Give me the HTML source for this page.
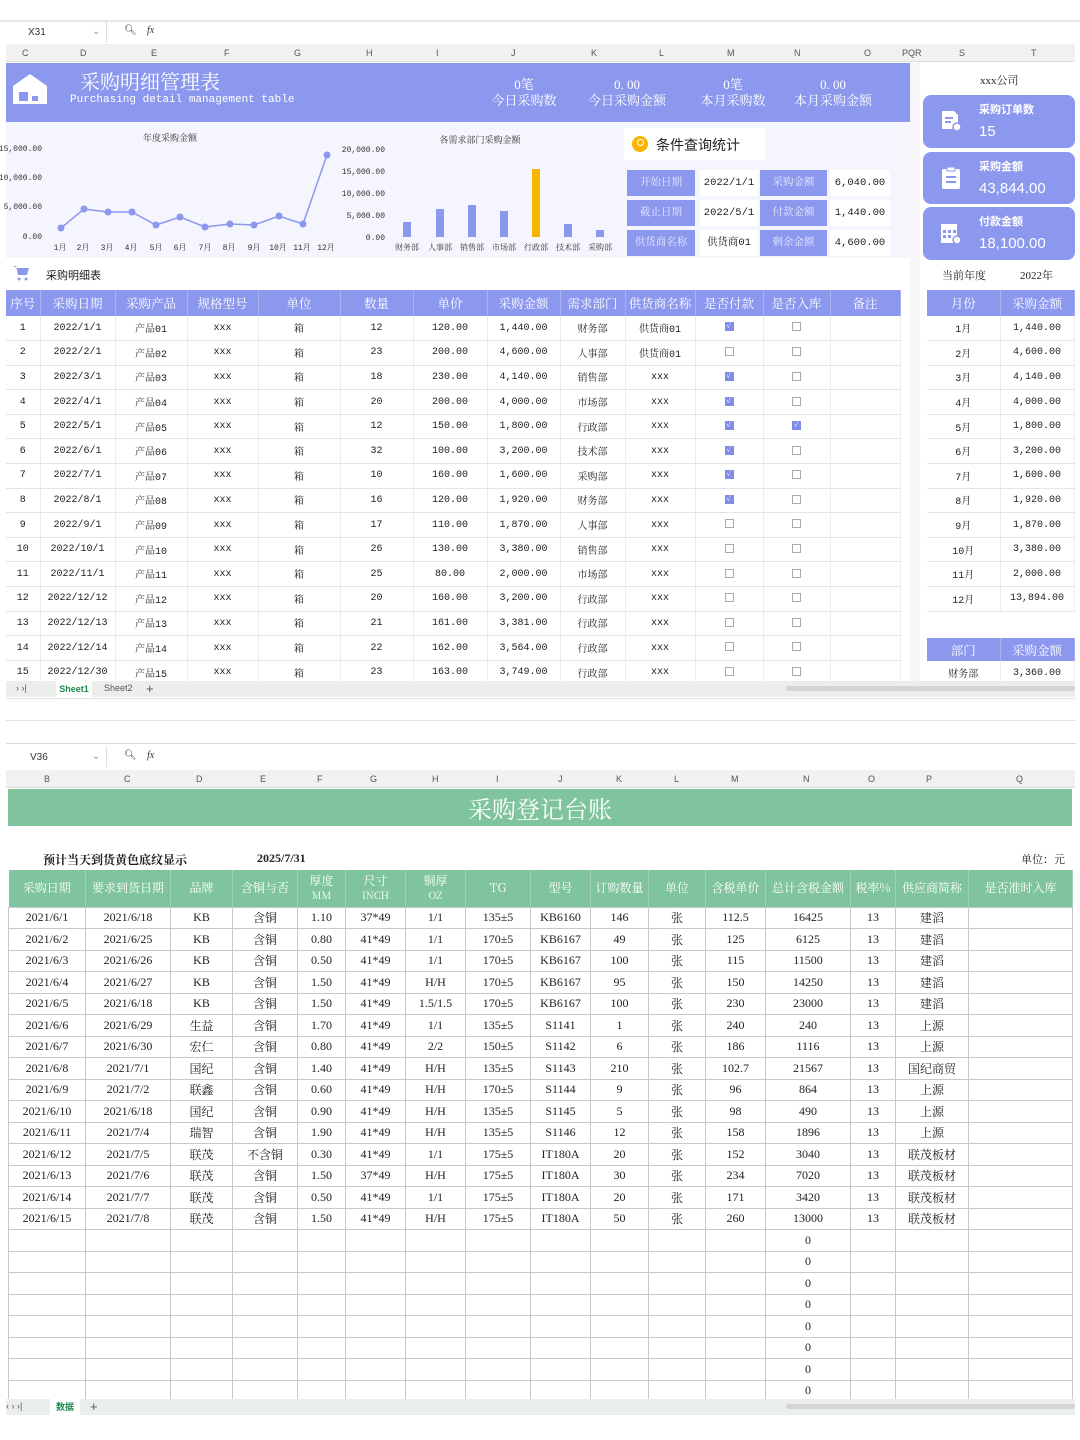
<!DOCTYPE html>
<html><head><meta charset="utf-8">
<style>
*{margin:0;padding:0;box-sizing:border-box}
body{width:1080px;height:1440px;background:#fff;position:relative;overflow:hidden;font-family:"Liberation Serif","Noto Serif CJK SC",serif;color:#222}
.a{position:absolute}
.fbar{position:absolute;left:6px;right:5px;height:20px;background:#fff;font-family:"Liberation Sans",sans-serif;font-size:10px;color:#333}
.colh{position:absolute;left:6px;right:5px;height:18px;background:#f1f1f1;border-bottom:1px solid #ddd;font-family:"Liberation Sans",sans-serif;font-size:9px;color:#555}
.colh span{position:absolute;top:4px}
table{border-collapse:collapse;table-layout:fixed;position:absolute}
td,th{text-align:center;white-space:nowrap;overflow:hidden}
.t1 th{background:#8c98ee;color:#fff;font-weight:normal;font-size:12.5px;height:26px;border-right:1px solid #a9b1f2;font-family:"Noto Serif CJK SC",serif}
.t1 td{height:24.6px;font-size:10px;font-family:"Liberation Mono","Noto Serif CJK SC",monospace;border-bottom:1px solid #e4e4e4;border-right:1px solid #eee}
.cb{display:inline-block;width:9px;height:9px;border:1px solid #aaa;vertical-align:middle}
.ck{display:inline-block;width:9px;height:9px;background:#7f8de8;vertical-align:middle;color:#fff;font-size:8px;line-height:9px}
.t2 th{background:#7fc49c;color:#fff;font-weight:normal;font-size:12px;height:37px;border-right:1px solid #9fd3b4;font-family:"Noto Serif CJK SC",serif;line-height:14px}
.t2 td{height:21.5px;font-size:12px;border:1px solid #c8c8c8}
.card{position:absolute;left:923px;width:152px;background:#8c98ee;border-radius:8px;color:#fff;font-family:"Liberation Sans","Noto Sans CJK SC",sans-serif}
.card .l{position:absolute;left:56px;top:6px;font-size:11px;font-weight:bold}
.card .n{position:absolute;left:56px;top:28px;font-size:15px}
.q{position:absolute;height:26px;font-size:10.5px;line-height:26px;text-align:center;font-family:"Liberation Mono","Noto Serif CJK SC",monospace}
.ql{background:#8c98ee;color:#e8eaff;width:68px}
.qv{background:#fff;width:58px}
.tab{position:absolute;left:6px;right:5px;height:16px;background:#eceeec;font-family:"Liberation Sans","Noto Sans CJK SC",sans-serif;font-size:9px;color:#555}
</style></head><body>

<div class="a" style="left:0;top:20px;width:1080px;height:2px;background:#e6e6e6"></div>
<div class="fbar" style="top:22px"><span class="a" style="left:22px;top:5px">X31</span><span class="a" style="left:86px;top:4px;color:#999">⌄</span><div class="a" style="left:100px;top:0;width:1px;height:20px;background:#ddd"></div><span class="a" style="left:118px;top:3px">🔍︎</span><span class="a" style="left:141px;top:3px;font-style:italic;font-family:'Liberation Serif'">fx</span></div>
<div class="colh" style="top:44px"><span style="left:16px">C</span><span style="left:74px">D</span><span style="left:145px">E</span><span style="left:218px">F</span><span style="left:288px">G</span><span style="left:360px">H</span><span style="left:430px">I</span><span style="left:505px">J</span><span style="left:585px">K</span><span style="left:653px">L</span><span style="left:721px">M</span><span style="left:788px">N</span><span style="left:858px">O</span><span style="left:896px">PQR</span><span style="left:953px">S</span><span style="left:1025px">T</span></div>

<div class="a" style="left:6px;top:63px;width:904px;height:59px;background:#8c98ee"></div>
<svg class="a" style="left:11px;top:72px" width="38" height="34" viewBox="0 0 38 34"><path d="M2 14 L19 2 L36 14 V32 H2Z" fill="#fff"/><rect x="8" y="20" width="9" height="9" fill="#8c98ee"/><rect x="21" y="24" width="6" height="5" fill="#8c98ee"/></svg>
<div class="a" style="left:80px;top:66px;font-size:20px;color:#fff;font-family:'Noto Serif CJK SC',serif">采购明细管理表</div>
<div class="a" style="left:70px;top:94px;font-size:11px;color:#fff;font-family:'Liberation Mono',monospace">Purchasing detail management table</div>
<div class="a" style="left:474px;top:77px;width:100px;text-align:center;color:#fff;font-size:13px;line-height:16px">0笔<br>今日采购数</div>
<div class="a" style="left:577px;top:77px;width:100px;text-align:center;color:#fff;font-size:13px;line-height:16px">0. 00<br>今日采购金额</div>
<div class="a" style="left:683px;top:77px;width:100px;text-align:center;color:#fff;font-size:13px;line-height:16px">0笔<br>本月采购数</div>
<div class="a" style="left:783px;top:77px;width:100px;text-align:center;color:#fff;font-size:13px;line-height:16px">0. 00<br>本月采购金额</div>

<div class="a" style="left:6px;top:122px;width:904px;height:136px;background:#f4f5fd"></div>
<svg class="a" style="left:0;top:122px" width="620" height="136" viewBox="0 122 620 136" font-family="Liberation Mono,Noto Serif CJK SC,monospace" font-size="8" fill="#333">
<text x="170" y="141" text-anchor="middle" font-size="9">年度采购金额</text>
<text x="42" y="151" text-anchor="end">15,000.00</text><text x="42" y="180" text-anchor="end">10,000.00</text><text x="42" y="209" text-anchor="end">5,000.00</text><text x="42" y="239" text-anchor="end">0.00</text>
<polyline fill="none" stroke="#8c98ee" stroke-width="1.5" points="61,228 84,209 108,212 132,212 156,225 180,217 205,227 230,224 254,225 279,216 303,224 327,155"/>
<g fill="#8c98ee"><circle cx="61" cy="228" r="3.5"/><circle cx="84" cy="209" r="3.5"/><circle cx="108" cy="212" r="3.5"/><circle cx="132" cy="212" r="3.5"/><circle cx="156" cy="225" r="3.5"/><circle cx="180" cy="217" r="3.5"/><circle cx="205" cy="227" r="3.5"/><circle cx="230" cy="224" r="3.5"/><circle cx="254" cy="225" r="3.5"/><circle cx="279" cy="216" r="3.5"/><circle cx="303" cy="224" r="3.5"/><circle cx="327" cy="155" r="3.5"/></g>
<g text-anchor="middle"><text x="60" y="250">1月</text><text x="83" y="250">2月</text><text x="107" y="250">3月</text><text x="131" y="250">4月</text><text x="156" y="250">5月</text><text x="180" y="250">6月</text><text x="205" y="250">7月</text><text x="229" y="250">8月</text><text x="254" y="250">9月</text><text x="278" y="250">10月</text><text x="302" y="250">11月</text><text x="326" y="250">12月</text></g>
<text x="480" y="143" text-anchor="middle" font-size="9">各需求部门采购金额</text>
<text x="385" y="152" text-anchor="end">20,000.00</text><text x="385" y="174" text-anchor="end">15,000.00</text><text x="385" y="196" text-anchor="end">10,000.00</text><text x="385" y="218" text-anchor="end">5,000.00</text><text x="385" y="240" text-anchor="end">0.00</text>
<g fill="#8c98ee"><rect x="403" y="222" width="8" height="15"/><rect x="436" y="209" width="8" height="28"/><rect x="468" y="205" width="8" height="32"/><rect x="500" y="211" width="8" height="26"/><rect x="564" y="224" width="8" height="13"/><rect x="596" y="230" width="8" height="7"/></g>
<rect x="532" y="169" width="8" height="68" fill="#f7b500"/>
<g text-anchor="middle"><text x="407" y="250">财务部</text><text x="440" y="250">人事部</text><text x="472" y="250">销售部</text><text x="504" y="250">市场部</text><text x="536" y="250">行政部</text><text x="568" y="250">技术部</text><text x="600" y="250">采购部</text></g>
</svg>

<div class="a" style="left:624px;top:128px;width:141px;height:32px;background:#fff"></div>
<div class="a" style="left:632px;top:136px;width:16px;height:16px;border-radius:50%;background:#f7b500"></div>
<div class="a" style="left:637px;top:139px;width:7px;height:7px;border-radius:50%;border:1.5px solid #fff"></div>
<div class="a" style="left:656px;top:135px;font-size:14px;font-family:'Noto Sans CJK SC',sans-serif">条件查询统计</div>
<div class="q ql" style="left:627px;top:170px">开始日期</div><div class="q qv" style="left:700px;top:170px">2022/1/1</div><div class="q ql" style="left:760px;top:170px;width:67px">采购金额</div><div class="q qv" style="left:830px;top:170px;width:60px">6,040.00</div>
<div class="q ql" style="left:627px;top:200px">截止日期</div><div class="q qv" style="left:700px;top:200px">2022/5/1</div><div class="q ql" style="left:760px;top:200px;width:67px">付款金额</div><div class="q qv" style="left:830px;top:200px;width:60px">1,440.00</div>
<div class="q ql" style="left:627px;top:230px">供货商名称</div><div class="q qv" style="left:700px;top:230px">供货商01</div><div class="q ql" style="left:760px;top:230px;width:67px">剩余金额</div><div class="q qv" style="left:830px;top:230px;width:60px">4,600.00</div>

<div class="a" style="left:910px;top:63px;width:10px;height:620px;background:#f6f6f8"></div>
<div class="a" style="left:980px;top:72px;font-size:11px">xxx公司</div>
<div class="card" style="top:95px;height:53px"><svg class="a" style="left:16px;top:14px" width="24" height="24" viewBox="0 0 24 24"><path d="M3 2h12l4 4v14H3z" fill="#fff"/><rect x="6" y="8" width="8" height="2" fill="#8c98ee"/><rect x="6" y="12" width="6" height="2" fill="#8c98ee"/><circle cx="18" cy="18" r="4" fill="#fff" stroke="#8c98ee" stroke-width="1.5"/></svg><div class="l">采购订单数</div><div class="n">15</div></div>
<div class="card" style="top:152px;height:52px"><svg class="a" style="left:17px;top:14px" width="22" height="24" viewBox="0 0 22 24"><rect x="2" y="3" width="18" height="20" rx="2" fill="#fff"/><rect x="7" y="1" width="8" height="4" fill="#fff" stroke="#8c98ee"/><rect x="6" y="10" width="10" height="2" fill="#8c98ee"/><rect x="6" y="15" width="10" height="2" fill="#8c98ee"/></svg><div class="l">采购金额</div><div class="n">43,844.00</div></div>
<div class="card" style="top:207px;height:53px"><svg class="a" style="left:16px;top:15px" width="24" height="24" viewBox="0 0 24 24"><rect x="2" y="2" width="16" height="19" fill="#fff"/><g fill="#8c98ee"><rect x="4" y="8" width="3" height="3"/><rect x="9" y="8" width="3" height="3"/><rect x="14" y="8" width="3" height="3"/><rect x="4" y="13" width="3" height="3"/><rect x="9" y="13" width="3" height="3"/></g><circle cx="18" cy="18" r="4" fill="#fff" stroke="#8c98ee" stroke-width="1.5"/></svg><div class="l">付款金额</div><div class="n">18,100.00</div></div>
<div class="a" style="left:942px;top:267px;font-size:11px">当前年度</div>
<div class="a" style="left:1020px;top:267px;font-size:11px">2022年</div>

<svg class="a" style="left:12px;top:265px" width="18" height="16" viewBox="0 0 18 16"><path d="M1 1h3l2 9h9l2-7H5" fill="#8c98ee"/><circle cx="7" cy="14" r="1.5" fill="#8c98ee"/><circle cx="14" cy="14" r="1.5" fill="#8c98ee"/></svg>
<div class="a" style="left:46px;top:267px;font-size:11px;font-family:'Noto Sans CJK SC',sans-serif">采购明细表</div>

<table class="t1" style="left:6px;top:290px;width:894px">
<colgroup><col style="width:34px"><col style="width:75px"><col style="width:72px"><col style="width:71px"><col style="width:82px"><col style="width:73px"><col style="width:74px"><col style="width:73px"><col style="width:65px"><col style="width:70px"><col style="width:68px"><col style="width:67px"><col style="width:70px"></colgroup>
<tr><th>序号</th><th>采购日期</th><th>采购产品</th><th>规格型号</th><th>单位</th><th>数量</th><th>单价</th><th>采购金额</th><th>需求部门</th><th>供货商名称</th><th>是否付款</th><th>是否入库</th><th>备注</th></tr>
<tr><td>1</td><td>2022/1/1</td><td>产品01</td><td>xxx</td><td>箱</td><td>12</td><td>120.00</td><td>1,440.00</td><td>财务部</td><td>供货商01</td><td><span class="ck">✓</span></td><td><span class="cb"></span></td><td></td></tr>
<tr><td>2</td><td>2022/2/1</td><td>产品02</td><td>xxx</td><td>箱</td><td>23</td><td>200.00</td><td>4,600.00</td><td>人事部</td><td>供货商01</td><td><span class="cb"></span></td><td><span class="cb"></span></td><td></td></tr>
<tr><td>3</td><td>2022/3/1</td><td>产品03</td><td>xxx</td><td>箱</td><td>18</td><td>230.00</td><td>4,140.00</td><td>销售部</td><td>xxx</td><td><span class="ck">✓</span></td><td><span class="cb"></span></td><td></td></tr>
<tr><td>4</td><td>2022/4/1</td><td>产品04</td><td>xxx</td><td>箱</td><td>20</td><td>200.00</td><td>4,000.00</td><td>市场部</td><td>xxx</td><td><span class="ck">✓</span></td><td><span class="cb"></span></td><td></td></tr>
<tr><td>5</td><td>2022/5/1</td><td>产品05</td><td>xxx</td><td>箱</td><td>12</td><td>150.00</td><td>1,800.00</td><td>行政部</td><td>xxx</td><td><span class="ck">✓</span></td><td><span class="ck">✓</span></td><td></td></tr>
<tr><td>6</td><td>2022/6/1</td><td>产品06</td><td>xxx</td><td>箱</td><td>32</td><td>100.00</td><td>3,200.00</td><td>技术部</td><td>xxx</td><td><span class="ck">✓</span></td><td><span class="cb"></span></td><td></td></tr>
<tr><td>7</td><td>2022/7/1</td><td>产品07</td><td>xxx</td><td>箱</td><td>10</td><td>160.00</td><td>1,600.00</td><td>采购部</td><td>xxx</td><td><span class="ck">✓</span></td><td><span class="cb"></span></td><td></td></tr>
<tr><td>8</td><td>2022/8/1</td><td>产品08</td><td>xxx</td><td>箱</td><td>16</td><td>120.00</td><td>1,920.00</td><td>财务部</td><td>xxx</td><td><span class="ck">✓</span></td><td><span class="cb"></span></td><td></td></tr>
<tr><td>9</td><td>2022/9/1</td><td>产品09</td><td>xxx</td><td>箱</td><td>17</td><td>110.00</td><td>1,870.00</td><td>人事部</td><td>xxx</td><td><span class="cb"></span></td><td><span class="cb"></span></td><td></td></tr>
<tr><td>10</td><td>2022/10/1</td><td>产品10</td><td>xxx</td><td>箱</td><td>26</td><td>130.00</td><td>3,380.00</td><td>销售部</td><td>xxx</td><td><span class="cb"></span></td><td><span class="cb"></span></td><td></td></tr>
<tr><td>11</td><td>2022/11/1</td><td>产品11</td><td>xxx</td><td>箱</td><td>25</td><td>80.00</td><td>2,000.00</td><td>市场部</td><td>xxx</td><td><span class="cb"></span></td><td><span class="cb"></span></td><td></td></tr>
<tr><td>12</td><td>2022/12/12</td><td>产品12</td><td>xxx</td><td>箱</td><td>20</td><td>160.00</td><td>3,200.00</td><td>行政部</td><td>xxx</td><td><span class="cb"></span></td><td><span class="cb"></span></td><td></td></tr>
<tr><td>13</td><td>2022/12/13</td><td>产品13</td><td>xxx</td><td>箱</td><td>21</td><td>161.00</td><td>3,381.00</td><td>行政部</td><td>xxx</td><td><span class="cb"></span></td><td><span class="cb"></span></td><td></td></tr>
<tr><td>14</td><td>2022/12/14</td><td>产品14</td><td>xxx</td><td>箱</td><td>22</td><td>162.00</td><td>3,564.00</td><td>行政部</td><td>xxx</td><td><span class="cb"></span></td><td><span class="cb"></span></td><td></td></tr>
<tr><td>15</td><td>2022/12/30</td><td>产品15</td><td>xxx</td><td>箱</td><td>23</td><td>163.00</td><td>3,749.00</td><td>行政部</td><td>xxx</td><td><span class="cb"></span></td><td><span class="cb"></span></td><td></td></tr>
</table>

<table class="t1" style="left:927px;top:290px;width:147px">
<colgroup><col style="width:73px"><col style="width:74px"></colgroup>
<tr><th>月份</th><th>采购金额</th></tr>
<tr><td>1月</td><td>1,440.00</td></tr><tr><td>2月</td><td>4,600.00</td></tr><tr><td>3月</td><td>4,140.00</td></tr><tr><td>4月</td><td>4,000.00</td></tr><tr><td>5月</td><td>1,800.00</td></tr><tr><td>6月</td><td>3,200.00</td></tr><tr><td>7月</td><td>1,600.00</td></tr><tr><td>8月</td><td>1,920.00</td></tr><tr><td>9月</td><td>1,870.00</td></tr><tr><td>10月</td><td>3,380.00</td></tr><tr><td>11月</td><td>2,000.00</td></tr><tr><td>12月</td><td>13,894.00</td></tr>
</table>
<table class="t1" style="left:927px;top:638px;width:147px">
<colgroup><col style="width:73px"><col style="width:74px"></colgroup>
<tr><th style="height:23px">部门</th><th style="height:23px">采购金额</th></tr>
<tr><td>财务部</td><td>3,360.00</td></tr>
</table>

<div class="tab" style="top:681px"><span class="a" style="left:10px;top:2px">› ›|</span><span class="a" style="left:50px;top:0;height:16px;width:36px;background:#fff;color:#1e8a4c;font-weight:bold;text-align:center;line-height:16px">Sheet1</span><span class="a" style="left:98px;top:2px">Sheet2</span><span class="a" style="left:140px;top:0;font-size:13px">+</span><div class="a" style="left:780px;top:5px;width:289px;height:5px;background:#d4d4d4;border-radius:3px"></div></div>
<div class="a" style="left:6px;top:698px;width:1070px;height:1px;background:#e2e2e2"></div>
<div class="a" style="left:6px;top:720px;width:1070px;height:1px;background:#e2e2e2"></div>
<div class="a" style="left:6px;top:743px;width:1070px;height:1px;background:#d8d8d8"></div>

<div class="fbar" style="top:747px"><span class="a" style="left:24px;top:5px">V36</span><span class="a" style="left:86px;top:4px;color:#999">⌄</span><div class="a" style="left:100px;top:0;width:1px;height:20px;background:#ddd"></div><span class="a" style="left:118px;top:3px">🔍︎</span><span class="a" style="left:141px;top:3px;font-style:italic;font-family:'Liberation Serif'">fx</span></div>
<div class="colh" style="top:770px"><span style="left:38px">B</span><span style="left:118px">C</span><span style="left:190px">D</span><span style="left:254px">E</span><span style="left:311px">F</span><span style="left:364px">G</span><span style="left:426px">H</span><span style="left:490px">I</span><span style="left:552px">J</span><span style="left:610px">K</span><span style="left:668px">L</span><span style="left:725px">M</span><span style="left:797px">N</span><span style="left:862px">O</span><span style="left:920px">P</span><span style="left:1010px">Q</span></div>
<div class="a" style="left:8px;top:789px;width:1064px;height:37px;background:#7fc49c;color:#fff;font-size:24px;text-align:center;line-height:37px;font-family:'Noto Serif CJK SC',serif">采购登记台账</div>
<div class="a" style="left:43px;top:851px;font-size:12px;font-weight:bold;font-family:'Noto Serif CJK SC',serif">预计当天到货黄色底纹显示</div>
<div class="a" style="left:257px;top:851px;font-size:12px;font-weight:bold">2025/7/31</div>
<div class="a" style="left:1021px;top:851px;font-size:11px">单位：元</div>

<table class="t2" style="left:8px;top:870px;width:1064px">
<colgroup><col style="width:77px"><col style="width:85px"><col style="width:62px"><col style="width:65px"><col style="width:48px"><col style="width:60px"><col style="width:60px"><col style="width:65px"><col style="width:60px"><col style="width:58px"><col style="width:57px"><col style="width:60px"><col style="width:85px"><col style="width:45px"><col style="width:73px"><col style="width:104px"></colgroup>
<tr><th>采购日期</th><th>要求到货日期</th><th>品牌</th><th>含铜与否</th><th>厚度<br><small>MM</small></th><th>尺寸<br><small>INCH</small></th><th>铜厚<br><small>OZ</small></th><th>TG</th><th>型号</th><th>订购数量</th><th>单位</th><th>含税单价</th><th>总计含税金额</th><th>税率%</th><th>供应商简称</th><th>是否准时入库</th></tr>
<tr><td>2021/6/1</td><td>2021/6/18</td><td>KB</td><td>含铜</td><td>1.10</td><td>37*49</td><td>1/1</td><td>135±5</td><td>KB6160</td><td>146</td><td>张</td><td>112.5</td><td>16425</td><td>13</td><td>建滔</td><td></td></tr>
<tr><td>2021/6/2</td><td>2021/6/25</td><td>KB</td><td>含铜</td><td>0.80</td><td>41*49</td><td>1/1</td><td>170±5</td><td>KB6167</td><td>49</td><td>张</td><td>125</td><td>6125</td><td>13</td><td>建滔</td><td></td></tr>
<tr><td>2021/6/3</td><td>2021/6/26</td><td>KB</td><td>含铜</td><td>0.50</td><td>41*49</td><td>1/1</td><td>170±5</td><td>KB6167</td><td>100</td><td>张</td><td>115</td><td>11500</td><td>13</td><td>建滔</td><td></td></tr>
<tr><td>2021/6/4</td><td>2021/6/27</td><td>KB</td><td>含铜</td><td>1.50</td><td>41*49</td><td>H/H</td><td>170±5</td><td>KB6167</td><td>95</td><td>张</td><td>150</td><td>14250</td><td>13</td><td>建滔</td><td></td></tr>
<tr><td>2021/6/5</td><td>2021/6/18</td><td>KB</td><td>含铜</td><td>1.50</td><td>41*49</td><td>1.5/1.5</td><td>170±5</td><td>KB6167</td><td>100</td><td>张</td><td>230</td><td>23000</td><td>13</td><td>建滔</td><td></td></tr>
<tr><td>2021/6/6</td><td>2021/6/29</td><td>生益</td><td>含铜</td><td>1.70</td><td>41*49</td><td>1/1</td><td>135±5</td><td>S1141</td><td>1</td><td>张</td><td>240</td><td>240</td><td>13</td><td>上源</td><td></td></tr>
<tr><td>2021/6/7</td><td>2021/6/30</td><td>宏仁</td><td>含铜</td><td>0.80</td><td>41*49</td><td>2/2</td><td>150±5</td><td>S1142</td><td>6</td><td>张</td><td>186</td><td>1116</td><td>13</td><td>上源</td><td></td></tr>
<tr><td>2021/6/8</td><td>2021/7/1</td><td>国纪</td><td>含铜</td><td>1.40</td><td>41*49</td><td>H/H</td><td>135±5</td><td>S1143</td><td>210</td><td>张</td><td>102.7</td><td>21567</td><td>13</td><td>国纪商贸</td><td></td></tr>
<tr><td>2021/6/9</td><td>2021/7/2</td><td>联鑫</td><td>含铜</td><td>0.60</td><td>41*49</td><td>H/H</td><td>170±5</td><td>S1144</td><td>9</td><td>张</td><td>96</td><td>864</td><td>13</td><td>上源</td><td></td></tr>
<tr><td>2021/6/10</td><td>2021/6/18</td><td>国纪</td><td>含铜</td><td>0.90</td><td>41*49</td><td>H/H</td><td>135±5</td><td>S1145</td><td>5</td><td>张</td><td>98</td><td>490</td><td>13</td><td>上源</td><td></td></tr>
<tr><td>2021/6/11</td><td>2021/7/4</td><td>瑞智</td><td>含铜</td><td>1.90</td><td>41*49</td><td>H/H</td><td>135±5</td><td>S1146</td><td>12</td><td>张</td><td>158</td><td>1896</td><td>13</td><td>上源</td><td></td></tr>
<tr><td>2021/6/12</td><td>2021/7/5</td><td>联茂</td><td>不含铜</td><td>0.30</td><td>41*49</td><td>1/1</td><td>175±5</td><td>IT180A</td><td>20</td><td>张</td><td>152</td><td>3040</td><td>13</td><td>联茂板材</td><td></td></tr>
<tr><td>2021/6/13</td><td>2021/7/6</td><td>联茂</td><td>含铜</td><td>1.50</td><td>37*49</td><td>H/H</td><td>175±5</td><td>IT180A</td><td>30</td><td>张</td><td>234</td><td>7020</td><td>13</td><td>联茂板材</td><td></td></tr>
<tr><td>2021/6/14</td><td>2021/7/7</td><td>联茂</td><td>含铜</td><td>0.50</td><td>41*49</td><td>1/1</td><td>175±5</td><td>IT180A</td><td>20</td><td>张</td><td>171</td><td>3420</td><td>13</td><td>联茂板材</td><td></td></tr>
<tr><td>2021/6/15</td><td>2021/7/8</td><td>联茂</td><td>含铜</td><td>1.50</td><td>41*49</td><td>H/H</td><td>175±5</td><td>IT180A</td><td>50</td><td>张</td><td>260</td><td>13000</td><td>13</td><td>联茂板材</td><td></td></tr>
<tr><td></td><td></td><td></td><td></td><td></td><td></td><td></td><td></td><td></td><td></td><td></td><td></td><td>0</td><td></td><td></td><td></td></tr>
<tr><td></td><td></td><td></td><td></td><td></td><td></td><td></td><td></td><td></td><td></td><td></td><td></td><td>0</td><td></td><td></td><td></td></tr>
<tr><td></td><td></td><td></td><td></td><td></td><td></td><td></td><td></td><td></td><td></td><td></td><td></td><td>0</td><td></td><td></td><td></td></tr>
<tr><td></td><td></td><td></td><td></td><td></td><td></td><td></td><td></td><td></td><td></td><td></td><td></td><td>0</td><td></td><td></td><td></td></tr>
<tr><td></td><td></td><td></td><td></td><td></td><td></td><td></td><td></td><td></td><td></td><td></td><td></td><td>0</td><td></td><td></td><td></td></tr>
<tr><td></td><td></td><td></td><td></td><td></td><td></td><td></td><td></td><td></td><td></td><td></td><td></td><td>0</td><td></td><td></td><td></td></tr>
<tr><td></td><td></td><td></td><td></td><td></td><td></td><td></td><td></td><td></td><td></td><td></td><td></td><td>0</td><td></td><td></td><td></td></tr>
<tr><td></td><td></td><td></td><td></td><td></td><td></td><td></td><td></td><td></td><td></td><td></td><td></td><td>0</td><td></td><td></td><td></td></tr>
</table>

<div class="tab" style="top:1399px;background:#ebefeb"><span class="a" style="left:0;top:2px">‹ › ›|</span><span class="a" style="left:44px;top:0;height:16px;width:30px;background:#fff;color:#1e8a4c;font-weight:bold;text-align:center;line-height:16px">数据</span><span class="a" style="left:84px;top:0;font-size:13px">+</span><div class="a" style="left:780px;top:5px;width:289px;height:5px;background:#d4d4d4;border-radius:3px"></div></div>
<div class="a" style="left:0;top:1415px;width:1080px;height:25px;background:#fff"></div>
</body></html>
